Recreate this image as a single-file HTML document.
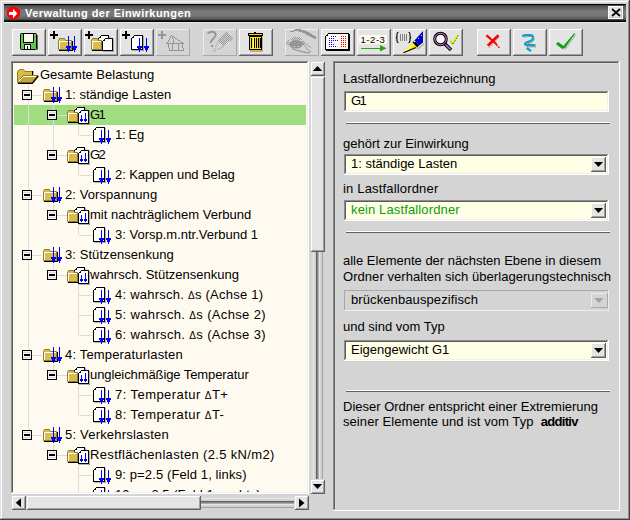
<!DOCTYPE html><html><head><meta charset="utf-8"><style>html,body{margin:0;padding:0;}body{width:630px;height:520px;position:relative;overflow:hidden;background:#d4d4d4;font-family:"Liberation Sans", sans-serif;}.t{position:absolute;white-space:nowrap;font-size:13px;line-height:20px;color:#000;}i{position:absolute;display:block;}</style></head><body><div style="position:absolute;left:0px;top:0px;width:630px;height:1px;background:#e0e0e0"></div><div style="position:absolute;left:0px;top:1px;width:628px;height:1px;background:#ffffff"></div><div style="position:absolute;left:0px;top:0px;width:1px;height:520px;background:#e0e0e0"></div><div style="position:absolute;left:1px;top:1px;width:1px;height:517px;background:#ffffff"></div><div style="position:absolute;left:628px;top:1px;width:1px;height:518px;background:#909090"></div><div style="position:absolute;left:629px;top:0px;width:1px;height:520px;background:#404040"></div><div style="position:absolute;left:1px;top:518px;width:628px;height:1px;background:#909090"></div><div style="position:absolute;left:0px;top:519px;width:630px;height:1px;background:#404040"></div><div style="position:absolute;left:4px;top:4px;width:622px;height:18px;background:linear-gradient(to bottom,#000 0px,#000 1px,#404040 1px,#505050 2px,#5c5c5c 3px,#686868 5px,#787878 7px,#787878 11px,#6c6c6c 13px,#5a5a5a 15px,#383838 16px,#000 17px,#000 18px)"></div><div style="position:absolute;left:4px;top:22px;width:622px;height:1px;background:#e8e8e8"></div><svg style="position:absolute;left:0px;top:0px;" width="30" height="26" viewBox="0 0 30 26" shape-rendering="crispEdges"><circle cx="13.5" cy="13" r="6.6" fill="#ff0000"/><rect x="9" y="12" width="5" height="3" fill="#fff"/><polygon points="13,8.8 17.3,13.5 13,18.2" fill="#fff" shape-rendering="auto"/></svg><div class="t" style="left:25px;top:3px;font-weight:bold;font-size:11px;letter-spacing:0.45px;color:#fff;">Verwaltung der Einwirkungen</div><div style="position:absolute;left:608px;top:6px;width:15px;height:13px;background:#e4e4e4;box-shadow: inset 0 0 0 1px #ffffff, inset -2px -2px 0 #c8c8c8;"></div><svg style="position:absolute;left:608px;top:6px;" width="15" height="13" viewBox="0 0 15 13" shape-rendering="crispEdges"><path d="M4 3L12 10M12 3L4 10" stroke="#000" stroke-width="1.7" shape-rendering="auto"/></svg><div style="position:absolute;left:12px;top:29px;width:34px;height:27px;background:#e4e4e4"><i style="left:0px;top:0px;width:33px;height:1px;background:#ffffff"></i><i style="left:0px;top:0px;width:1px;height:26px;background:#ffffff"></i><i style="left:0px;top:26px;width:34px;height:1px;background:#606060"></i><i style="left:33px;top:0px;width:1px;height:27px;background:#606060"></i><i style="left:1px;top:25px;width:32px;height:1px;background:#a0a0a0"></i><i style="left:32px;top:1px;width:1px;height:25px;background:#a0a0a0"></i></div><div style="position:absolute;left:48px;top:29px;width:34px;height:27px;background:#e4e4e4"><i style="left:0px;top:0px;width:33px;height:1px;background:#ffffff"></i><i style="left:0px;top:0px;width:1px;height:26px;background:#ffffff"></i><i style="left:0px;top:26px;width:34px;height:1px;background:#606060"></i><i style="left:33px;top:0px;width:1px;height:27px;background:#606060"></i><i style="left:1px;top:25px;width:32px;height:1px;background:#a0a0a0"></i><i style="left:32px;top:1px;width:1px;height:25px;background:#a0a0a0"></i></div><div style="position:absolute;left:84px;top:29px;width:34px;height:27px;background:#e4e4e4"><i style="left:0px;top:0px;width:33px;height:1px;background:#ffffff"></i><i style="left:0px;top:0px;width:1px;height:26px;background:#ffffff"></i><i style="left:0px;top:26px;width:34px;height:1px;background:#606060"></i><i style="left:33px;top:0px;width:1px;height:27px;background:#606060"></i><i style="left:1px;top:25px;width:32px;height:1px;background:#a0a0a0"></i><i style="left:32px;top:1px;width:1px;height:25px;background:#a0a0a0"></i></div><div style="position:absolute;left:120px;top:29px;width:34px;height:27px;background:#e4e4e4"><i style="left:0px;top:0px;width:33px;height:1px;background:#ffffff"></i><i style="left:0px;top:0px;width:1px;height:26px;background:#ffffff"></i><i style="left:0px;top:26px;width:34px;height:1px;background:#606060"></i><i style="left:33px;top:0px;width:1px;height:27px;background:#606060"></i><i style="left:1px;top:25px;width:32px;height:1px;background:#a0a0a0"></i><i style="left:32px;top:1px;width:1px;height:25px;background:#a0a0a0"></i></div><div style="position:absolute;left:156px;top:29px;width:34px;height:27px;background:#d4d4d4"><i style="left:0px;top:0px;width:33px;height:1px;background:#ececec"></i><i style="left:0px;top:0px;width:1px;height:26px;background:#ececec"></i><i style="left:0px;top:26px;width:34px;height:1px;background:#a8a8a8"></i><i style="left:33px;top:0px;width:1px;height:27px;background:#a8a8a8"></i></div><div style="position:absolute;left:203px;top:29px;width:34px;height:27px;background:#d4d4d4"><i style="left:0px;top:0px;width:33px;height:1px;background:#ececec"></i><i style="left:0px;top:0px;width:1px;height:26px;background:#ececec"></i><i style="left:0px;top:26px;width:34px;height:1px;background:#a8a8a8"></i><i style="left:33px;top:0px;width:1px;height:27px;background:#a8a8a8"></i></div><div style="position:absolute;left:239px;top:29px;width:34px;height:27px;background:#e4e4e4"><i style="left:0px;top:0px;width:33px;height:1px;background:#ffffff"></i><i style="left:0px;top:0px;width:1px;height:26px;background:#ffffff"></i><i style="left:0px;top:26px;width:34px;height:1px;background:#606060"></i><i style="left:33px;top:0px;width:1px;height:27px;background:#606060"></i><i style="left:1px;top:25px;width:32px;height:1px;background:#a0a0a0"></i><i style="left:32px;top:1px;width:1px;height:25px;background:#a0a0a0"></i></div><div style="position:absolute;left:285px;top:29px;width:34px;height:27px;background:#d4d4d4"><i style="left:0px;top:0px;width:33px;height:1px;background:#ececec"></i><i style="left:0px;top:0px;width:1px;height:26px;background:#ececec"></i><i style="left:0px;top:26px;width:34px;height:1px;background:#a8a8a8"></i><i style="left:33px;top:0px;width:1px;height:27px;background:#a8a8a8"></i></div><div style="position:absolute;left:321px;top:29px;width:34px;height:27px;background:#e4e4e4"><i style="left:0px;top:0px;width:33px;height:1px;background:#ffffff"></i><i style="left:0px;top:0px;width:1px;height:26px;background:#ffffff"></i><i style="left:0px;top:26px;width:34px;height:1px;background:#606060"></i><i style="left:33px;top:0px;width:1px;height:27px;background:#606060"></i><i style="left:1px;top:25px;width:32px;height:1px;background:#a0a0a0"></i><i style="left:32px;top:1px;width:1px;height:25px;background:#a0a0a0"></i></div><div style="position:absolute;left:357px;top:29px;width:34px;height:27px;background:#e4e4e4"><i style="left:0px;top:0px;width:33px;height:1px;background:#ffffff"></i><i style="left:0px;top:0px;width:1px;height:26px;background:#ffffff"></i><i style="left:0px;top:26px;width:34px;height:1px;background:#606060"></i><i style="left:33px;top:0px;width:1px;height:27px;background:#606060"></i><i style="left:1px;top:25px;width:32px;height:1px;background:#a0a0a0"></i><i style="left:32px;top:1px;width:1px;height:25px;background:#a0a0a0"></i></div><div style="position:absolute;left:393px;top:29px;width:34px;height:27px;background:#e4e4e4"><i style="left:0px;top:0px;width:33px;height:1px;background:#ffffff"></i><i style="left:0px;top:0px;width:1px;height:26px;background:#ffffff"></i><i style="left:0px;top:26px;width:34px;height:1px;background:#606060"></i><i style="left:33px;top:0px;width:1px;height:27px;background:#606060"></i><i style="left:1px;top:25px;width:32px;height:1px;background:#a0a0a0"></i><i style="left:32px;top:1px;width:1px;height:25px;background:#a0a0a0"></i></div><div style="position:absolute;left:429px;top:29px;width:34px;height:27px;background:#e4e4e4"><i style="left:0px;top:0px;width:33px;height:1px;background:#ffffff"></i><i style="left:0px;top:0px;width:1px;height:26px;background:#ffffff"></i><i style="left:0px;top:26px;width:34px;height:1px;background:#606060"></i><i style="left:33px;top:0px;width:1px;height:27px;background:#606060"></i><i style="left:1px;top:25px;width:32px;height:1px;background:#a0a0a0"></i><i style="left:32px;top:1px;width:1px;height:25px;background:#a0a0a0"></i></div><div style="position:absolute;left:477px;top:29px;width:34px;height:27px;background:#e4e4e4"><i style="left:0px;top:0px;width:33px;height:1px;background:#ffffff"></i><i style="left:0px;top:0px;width:1px;height:26px;background:#ffffff"></i><i style="left:0px;top:26px;width:34px;height:1px;background:#606060"></i><i style="left:33px;top:0px;width:1px;height:27px;background:#606060"></i><i style="left:1px;top:25px;width:32px;height:1px;background:#a0a0a0"></i><i style="left:32px;top:1px;width:1px;height:25px;background:#a0a0a0"></i></div><div style="position:absolute;left:513px;top:29px;width:34px;height:27px;background:#e4e4e4"><i style="left:0px;top:0px;width:33px;height:1px;background:#ffffff"></i><i style="left:0px;top:0px;width:1px;height:26px;background:#ffffff"></i><i style="left:0px;top:26px;width:34px;height:1px;background:#606060"></i><i style="left:33px;top:0px;width:1px;height:27px;background:#606060"></i><i style="left:1px;top:25px;width:32px;height:1px;background:#a0a0a0"></i><i style="left:32px;top:1px;width:1px;height:25px;background:#a0a0a0"></i></div><div style="position:absolute;left:549px;top:29px;width:34px;height:27px;background:#e4e4e4"><i style="left:0px;top:0px;width:33px;height:1px;background:#ffffff"></i><i style="left:0px;top:0px;width:1px;height:26px;background:#ffffff"></i><i style="left:0px;top:26px;width:34px;height:1px;background:#606060"></i><i style="left:33px;top:0px;width:1px;height:27px;background:#606060"></i><i style="left:1px;top:25px;width:32px;height:1px;background:#a0a0a0"></i><i style="left:32px;top:1px;width:1px;height:25px;background:#a0a0a0"></i></div><svg style="position:absolute;left:0;top:0" width="630" height="520" viewBox="0 0 630 520" shape-rendering="crispEdges"><rect x="20" y="33" width="17" height="17" rx="2" fill="#000" shape-rendering="auto"/><rect x="21" y="34" width="15" height="15" fill="#5cc84c"/><rect x="23" y="33" width="11" height="10" fill="#000"/><rect x="24" y="34" width="9" height="8" fill="#fff8ec"/><rect x="24" y="44" width="7" height="6" fill="#000"/><rect x="25" y="45" width="5" height="4" fill="#fff"/><rect x="27" y="46" width="1" height="3" fill="#000"/><rect x="37" y="35" width="1" height="15" fill="#606060"/><rect x="50" y="34" width="8" height="2" fill="#000"/><rect x="53" y="31" width="2" height="8" fill="#000"/><rect x="59" y="50" width="14" height="1" fill="#000"/><rect x="72" y="41" width="1" height="10" fill="#000"/><path d="M58.5 49.5V40.5L59.5 38.5H64.5L65.5 40.5H71.5V49.5Z" fill="#dcbc48" stroke="#8c7c34" stroke-width="1" shape-rendering="auto"/><path d="M59.5 49V41.5H71" stroke="#fff" stroke-width="1" fill="none"/><rect x="68" y="36" width="1" height="16" fill="#0000ff"/><rect x="66" y="46" width="5" height="2" fill="#0000ff"/><rect x="67" y="48" width="3" height="2" fill="#0000ff"/><rect x="74" y="36" width="1" height="16" fill="#0000ff"/><rect x="72" y="46" width="5" height="2" fill="#0000ff"/><rect x="73" y="48" width="3" height="2" fill="#0000ff"/><rect x="85" y="34" width="8" height="2" fill="#000"/><rect x="88" y="31" width="2" height="8" fill="#000"/><rect x="99" y="36" width="10" height="11" fill="#fff"/><rect x="101" y="35" width="8" height="1" fill="#000"/><rect x="98" y="38" width="1" height="9" fill="#000"/><rect x="108" y="35" width="1" height="12" fill="#000"/><rect x="98" y="46" width="11" height="1" fill="#000"/><rect x="99" y="37" width="1" height="1" fill="#000"/><rect x="100" y="36" width="1" height="1" fill="#000"/><rect x="100" y="37" width="1" height="1" fill="#000"/><rect x="99" y="47" width="11" height="1" fill="#808080" opacity="0.6"/><rect x="109" y="36" width="1" height="12" fill="#808080" opacity="0.6"/><rect x="92" y="50" width="11" height="1" fill="#000"/><rect x="102" y="41" width="1" height="10" fill="#000"/><path d="M91.5 49.5V40.5L92.5 38.5H97.5L98.5 40.5H101.5V49.5Z" fill="#dcbc48" stroke="#8c7c34" stroke-width="1" shape-rendering="auto"/><path d="M92.5 49V41.5H101" stroke="#fff" stroke-width="1" fill="none"/><rect x="103" y="39" width="10" height="12" fill="#fff"/><rect x="105" y="38" width="8" height="1" fill="#000"/><rect x="102" y="41" width="1" height="10" fill="#000"/><rect x="112" y="38" width="1" height="13" fill="#000"/><rect x="102" y="50" width="11" height="1" fill="#000"/><rect x="103" y="40" width="1" height="1" fill="#000"/><rect x="104" y="39" width="1" height="1" fill="#000"/><rect x="104" y="40" width="1" height="1" fill="#000"/><rect x="103" y="51" width="11" height="1" fill="#808080" opacity="0.6"/><rect x="113" y="39" width="1" height="13" fill="#808080" opacity="0.6"/><rect x="122" y="34" width="8" height="2" fill="#000"/><rect x="125" y="31" width="2" height="8" fill="#000"/><rect x="132" y="36" width="11" height="14" fill="#fff"/><rect x="134" y="35" width="9" height="1" fill="#000"/><rect x="131" y="38" width="1" height="12" fill="#000"/><rect x="142" y="35" width="1" height="15" fill="#000"/><rect x="131" y="49" width="12" height="1" fill="#000"/><rect x="132" y="37" width="1" height="1" fill="#000"/><rect x="133" y="36" width="1" height="1" fill="#000"/><rect x="133" y="37" width="1" height="1" fill="#000"/><rect x="132" y="50" width="12" height="1" fill="#808080" opacity="0.6"/><rect x="143" y="36" width="1" height="15" fill="#808080" opacity="0.6"/><rect x="139" y="38" width="1" height="14" fill="#0000ff"/><rect x="137" y="46" width="5" height="2" fill="#0000ff"/><rect x="138" y="48" width="3" height="2" fill="#0000ff"/><rect x="146" y="38" width="1" height="14" fill="#0000ff"/><rect x="144" y="46" width="5" height="2" fill="#0000ff"/><rect x="145" y="48" width="3" height="2" fill="#0000ff"/><rect x="158" y="34" width="8" height="2" fill="#969696"/><rect x="161" y="31" width="2" height="8" fill="#969696"/><rect x="171" y="35" width="1" height="1" fill="#969696"/><rect x="170" y="36" width="1" height="1" fill="#969696"/><rect x="170" y="37" width="1" height="1" fill="#969696"/><rect x="169" y="38" width="1" height="1" fill="#969696"/><rect x="169" y="39" width="1" height="1" fill="#969696"/><rect x="168" y="40" width="1" height="1" fill="#969696"/><rect x="168" y="41" width="1" height="1" fill="#969696"/><rect x="167" y="42" width="1" height="1" fill="#969696"/><rect x="172" y="36" width="1" height="1" fill="#969696"/><rect x="172" y="37" width="1" height="1" fill="#969696"/><rect x="172" y="38" width="1" height="1" fill="#969696"/><rect x="173" y="39" width="1" height="1" fill="#969696"/><rect x="173" y="40" width="1" height="1" fill="#969696"/><rect x="173" y="41" width="1" height="1" fill="#969696"/><rect x="173" y="42" width="1" height="1" fill="#969696"/><rect x="173" y="36" width="1" height="1" fill="#969696"/><rect x="174" y="37" width="1" height="1" fill="#969696"/><rect x="175" y="38" width="1" height="1" fill="#969696"/><rect x="176" y="38" width="1" height="1" fill="#969696"/><rect x="177" y="39" width="1" height="1" fill="#969696"/><rect x="178" y="40" width="1" height="1" fill="#969696"/><rect x="179" y="40" width="1" height="1" fill="#969696"/><rect x="180" y="41" width="1" height="1" fill="#969696"/><rect x="181" y="42" width="1" height="1" fill="#969696"/><rect x="182" y="42" width="1" height="1" fill="#969696"/><rect x="168" y="44" width="1" height="1" fill="#969696"/><rect x="168" y="45" width="1" height="1" fill="#969696"/><rect x="168" y="46" width="1" height="1" fill="#969696"/><rect x="168" y="47" width="1" height="1" fill="#969696"/><rect x="169" y="48" width="1" height="1" fill="#969696"/><rect x="169" y="49" width="1" height="1" fill="#969696"/><rect x="182" y="44" width="1" height="1" fill="#969696"/><rect x="182" y="45" width="1" height="1" fill="#969696"/><rect x="182" y="46" width="1" height="1" fill="#969696"/><rect x="182" y="47" width="1" height="1" fill="#969696"/><rect x="183" y="48" width="1" height="1" fill="#969696"/><rect x="183" y="49" width="1" height="1" fill="#969696"/><rect x="166" y="43" width="18" height="1" fill="#969696"/><rect x="172" y="44" width="1" height="6" fill="#969696"/><rect x="178" y="44" width="1" height="6" fill="#969696"/><rect x="169" y="50" width="15" height="1" fill="#969696"/><g fill="none" stroke="#969696" stroke-width="2" shape-rendering="auto"><path d="M207.5 33.5Q210 31.5 213 31.8Q216 32.5 215.5 35.5Q214.5 38 212 40Q211 41 211 43"/></g><rect x="210.5" y="44.5" width="2" height="2" fill="#969696"/><defs><pattern id="hatch" width="2" height="2" patternUnits="userSpaceOnUse"><rect width="1" height="1" fill="#969696"/><rect x="1" y="1" width="1" height="1" fill="#969696"/></pattern></defs><polygon points="226.5,32 233,38.5 223.5,46.5 218.5,40.5" fill="url(#hatch)"/><path d="M218.5 40.5L213.5 51.5L223.5 46.5" fill="none" stroke="#969696" stroke-width="1" stroke-dasharray="1 1" shape-rendering="auto"/><rect x="250" y="37" width="13" height="15" fill="#b8b090"/><rect x="248" y="33" width="15" height="3" fill="#000"/><rect x="249" y="34" width="13" height="1" fill="#f0e000"/><rect x="254" y="32" width="2" height="1" fill="#000"/><rect x="249" y="36" width="13" height="14" fill="#000"/><rect x="250" y="37" width="11" height="12" fill="#ffe800"/><rect x="251" y="38" width="1" height="10" fill="#000"/><rect x="253" y="38" width="1" height="10" fill="#fff"/><rect x="254" y="38" width="1" height="10" fill="#000"/><rect x="256" y="38" width="1" height="10" fill="#000"/><rect x="258" y="38" width="1" height="10" fill="#000"/><rect x="259" y="38" width="1" height="10" fill="#e8a040"/><rect x="260" y="38" width="1" height="10" fill="#000"/><rect x="295" y="29" width="6" height="1" fill="#969696"/><rect x="293" y="30" width="12" height="1" fill="#969696"/><rect x="290" y="31" width="4" height="1" fill="#969696"/><rect x="299" y="31" width="8" height="1" fill="#969696"/><rect x="302" y="32" width="7" height="1" fill="#969696"/><rect x="305" y="33" width="6" height="1" fill="#969696"/><rect x="306" y="34" width="6" height="1" fill="#969696"/><rect x="308" y="35" width="6" height="1" fill="#969696"/><rect x="310" y="36" width="6" height="1" fill="#969696"/><rect x="312" y="37" width="4" height="1" fill="#969696"/><rect x="314" y="38" width="2" height="1" fill="#969696"/><rect x="293" y="37" width="1" height="1" fill="#969696"/><rect x="295" y="37" width="1" height="1" fill="#969696"/><rect x="297" y="37" width="1" height="1" fill="#969696"/><rect x="299" y="37" width="1" height="1" fill="#969696"/><rect x="292" y="38" width="1" height="1" fill="#969696"/><rect x="294" y="38" width="1" height="1" fill="#969696"/><rect x="296" y="38" width="1" height="1" fill="#969696"/><rect x="298" y="38" width="1" height="1" fill="#969696"/><rect x="300" y="38" width="1" height="1" fill="#969696"/><rect x="291" y="39" width="1" height="1" fill="#969696"/><rect x="293" y="39" width="1" height="1" fill="#969696"/><rect x="295" y="39" width="1" height="1" fill="#969696"/><rect x="297" y="39" width="1" height="1" fill="#969696"/><rect x="299" y="39" width="1" height="1" fill="#969696"/><rect x="301" y="39" width="1" height="1" fill="#969696"/><rect x="288" y="40" width="1" height="1" fill="#969696"/><rect x="287" y="41" width="1" height="1" fill="#969696"/><rect x="303" y="41" width="1" height="1" fill="#969696"/><rect x="286" y="42" width="1" height="1" fill="#969696"/><rect x="288" y="42" width="1" height="1" fill="#969696"/><rect x="287" y="43" width="1" height="1" fill="#969696"/><rect x="303" y="43" width="1" height="1" fill="#969696"/><rect x="286" y="44" width="1" height="1" fill="#969696"/><rect x="288" y="44" width="1" height="1" fill="#969696"/><path d="M289 44.5Q290 40 296 40Q302 40 303 44Q302 48.5 296 48.5Q290 48.5 289 44.5Z" fill="#969696" shape-rendering="auto"/><rect x="294" y="46" width="1" height="1" fill="#d4d4d4"/><rect x="298" y="46" width="1" height="1" fill="#d4d4d4"/><path d="M292 48.5L296 50L301 51.3L305.5 52.3L310 53" stroke="#969696" stroke-width="1.2" fill="none" shape-rendering="auto"/><path d="M302 41.5L310.8 47.4" stroke="#969696" stroke-width="1.3" stroke-dasharray="1.5 1" fill="none" shape-rendering="auto"/><path d="M302.8 43.6L307.6 49.5L310.8 52.2" stroke="#969696" stroke-width="1.2" stroke-dasharray="1.5 1" fill="none" shape-rendering="auto"/><rect x="326" y="34" width="23" height="16" fill="#fffaf0"/><rect x="328" y="33" width="21" height="1" fill="#000"/><rect x="325" y="36" width="1" height="14" fill="#000"/><rect x="348" y="33" width="1" height="17" fill="#000"/><rect x="325" y="49" width="24" height="1" fill="#000"/><rect x="326" y="35" width="1" height="1" fill="#000"/><rect x="327" y="34" width="1" height="1" fill="#000"/><rect x="327" y="35" width="1" height="1" fill="#000"/><rect x="326" y="50" width="24" height="1" fill="#808080" opacity="0.6"/><rect x="349" y="34" width="1" height="17" fill="#808080" opacity="0.6"/><rect x="326" y="50" width="24" height="1" fill="#000"/><rect x="349" y="34" width="1" height="17" fill="#000"/><rect x="331" y="36" width="1" height="1" fill="#0000ff"/><rect x="333" y="36" width="1" height="1" fill="#0000ff"/><rect x="335" y="36" width="1" height="1" fill="#0000ff"/><rect x="341" y="36" width="1" height="1" fill="#ff0000"/><rect x="343" y="36" width="1" height="1" fill="#ff0000"/><rect x="345" y="36" width="1" height="1" fill="#ff0000"/><rect x="329" y="38" width="1" height="1" fill="#0000ff"/><rect x="331" y="38" width="1" height="1" fill="#0000ff"/><rect x="333" y="38" width="1" height="1" fill="#0000ff"/><rect x="341" y="38" width="1" height="1" fill="#ff0000"/><rect x="343" y="38" width="1" height="1" fill="#ff0000"/><rect x="345" y="38" width="1" height="1" fill="#ff0000"/><rect x="329" y="40" width="1" height="1" fill="#0000ff"/><rect x="331" y="40" width="1" height="1" fill="#0000ff"/><rect x="333" y="40" width="1" height="1" fill="#0000ff"/><rect x="335" y="40" width="1" height="1" fill="#0000ff"/><rect x="337" y="40" width="1" height="1" fill="#0000ff"/><rect x="341" y="40" width="1" height="1" fill="#ff0000"/><rect x="343" y="40" width="1" height="1" fill="#ff0000"/><rect x="345" y="40" width="1" height="1" fill="#ff0000"/><rect x="329" y="42" width="1" height="1" fill="#0000ff"/><rect x="331" y="42" width="1" height="1" fill="#0000ff"/><rect x="341" y="42" width="1" height="1" fill="#ff0000"/><rect x="343" y="42" width="1" height="1" fill="#ff0000"/><rect x="345" y="42" width="1" height="1" fill="#ff0000"/><rect x="329" y="44" width="1" height="1" fill="#0000ff"/><rect x="331" y="44" width="1" height="1" fill="#0000ff"/><rect x="333" y="44" width="1" height="1" fill="#0000ff"/><rect x="341" y="44" width="1" height="1" fill="#ff0000"/><rect x="343" y="44" width="1" height="1" fill="#ff0000"/><rect x="345" y="44" width="1" height="1" fill="#ff0000"/><rect x="329" y="46" width="1" height="1" fill="#0000ff"/><rect x="331" y="46" width="1" height="1" fill="#0000ff"/><rect x="333" y="46" width="1" height="1" fill="#0000ff"/><rect x="335" y="46" width="1" height="1" fill="#0000ff"/><rect x="341" y="46" width="1" height="1" fill="#ff0000"/><rect x="343" y="46" width="1" height="1" fill="#ff0000"/><rect x="345" y="46" width="1" height="1" fill="#ff0000"/><rect x="359" y="35" width="28" height="9" fill="#fffaf0"/><text x="360.5" y="43" font-family="Liberation Sans" font-size="9.5" letter-spacing="0.55" fill="#000" shape-rendering="auto">1-2-3</text><path d="M361 48.3H383" stroke="#30a010" stroke-width="1.6"/><polygon points="380,45 386.5,48.3 380,51.5" fill="#30a010" shape-rendering="auto"/><g fill="none" stroke="#000" stroke-width="1.1" shape-rendering="auto"><path d="M398.5 32.3Q397 32.5 397 34V36.5Q397 37.5 395.8 37.5Q397 37.5 397 38.5V41Q397 42.5 398.5 42.7"/><path d="M408.5 32.3Q410 32.5 410 34V36.5Q410 37.5 411.2 37.5Q410 37.5 410 38.5V41Q410 42.5 408.5 42.7"/></g><rect x="400" y="34" width="1" height="7" fill="#808080"/><rect x="402" y="34" width="1" height="7" fill="#808080"/><rect x="404" y="34" width="1" height="7" fill="#808080"/><rect x="406" y="34" width="1" height="7" fill="#808080"/><g shape-rendering="auto"><polygon points="415,50 420,46 424,43 424,45 419,49" fill="#b0a880" opacity="0.7"/><polygon points="423,31 423,42.5 419,45.5 414.5,40.5" fill="#0000d0"/><rect x="421" y="35" width="1" height="1" fill="#f0f000"/><rect x="418" y="38" width="1" height="1" fill="#f0f000"/><polygon points="414.5,40.5 419,45.5 417,47.5 412.5,42.5" fill="#000"/><rect x="414" y="41" width="1.2" height="1.2" fill="#fff"/><polygon points="412.5,42.5 417,47.5 405,52.5 403.5,52" fill="#f0e800"/><path d="M405 51L413.5 44.5" stroke="#fff" stroke-width="1"/><path d="M403.5 52.8L416 47.5" stroke="#000" stroke-width="1.2"/></g><g shape-rendering="auto"><path d="M445 44L451 50" stroke="#000" stroke-width="3.5"/><path d="M445.5 44.5L450.5 49.5" stroke="#c070e0" stroke-width="1.6"/><circle cx="440.5" cy="39" r="5.8" fill="#fafafa" stroke="#000" stroke-width="3"/><circle cx="440.5" cy="39" r="5.8" fill="none" stroke="#e080d0" stroke-width="1"/><path d="M450 40.5L452.5 43.5L458 34" stroke="#f0f000" stroke-width="1.5" fill="none"/><path d="M451 41.5L453 44.5L458.5 35" stroke="#008000" stroke-width="1" stroke-dasharray="1 1" fill="none"/></g><g shape-rendering="auto"><path d="M489.5 47.5L499.5 37" stroke="#708070" stroke-width="1" stroke-dasharray="1 1" fill="none"/><polygon points="485.5,36 487.5,34.5 497,43.5 496,45" fill="#ff0000"/><path d="M496 44L497.5 46" stroke="#ff0000" stroke-width="1.3"/><rect x="498" y="46.5" width="1.5" height="1.5" fill="#ff0000"/><path d="M498.5 35.3L487.8 45.8" stroke="#ff0000" stroke-width="2.8" fill="none"/></g><g shape-rendering="auto" fill="none" stroke-linecap="round"><path d="M523.5 36.5L525.5 35.5H531Q533.5 36 533.2 38.5Q532.5 41 529.5 42L526.5 43.5Q524.5 45 526.5 46H535" stroke="#888" stroke-width="1" transform="translate(0.8,0.8)"/><path d="M523 35.8L525 35H531Q533.3 35.5 533 38.2Q532.3 40.5 529 41.5L526 42.8Q524 44.2 526 45H534.5" stroke="#10a0c8" stroke-width="2.2"/><path d="M527.3 48.5L530.3 50.5" stroke="#10a0c8" stroke-width="2.2"/></g><g shape-rendering="auto"><path d="M565 49.5L576 34.5" stroke="#707070" stroke-width="1" stroke-dasharray="1 1" fill="none"/><path d="M557 43L563.5 48" stroke="#10a010" stroke-width="3" fill="none"/><polygon points="562.3,47.2 564.5,48.8 575.1,33.7 574.3,33" fill="#10a010"/></g></svg><div style="position:absolute;left:11px;top:61px;width:298px;height:433px;background:#fffaf0"><i style="left:0px;top:0px;width:297px;height:1px;background:#8c8c8c"></i><i style="left:0px;top:0px;width:1px;height:432px;background:#8c8c8c"></i><i style="left:1px;top:1px;width:295px;height:1px;background:#5c5c5c"></i><i style="left:1px;top:1px;width:1px;height:430px;background:#5c5c5c"></i><i style="left:0px;top:432px;width:298px;height:1px;background:#ffffff"></i><i style="left:297px;top:0px;width:1px;height:433px;background:#ffffff"></i><i style="left:1px;top:431px;width:296px;height:1px;background:#f0f0f0"></i><i style="left:296px;top:1px;width:1px;height:431px;background:#f0f0f0"></i></div><div style="position:absolute;left:13px;top:63px;width:294px;height:429px;overflow:hidden;"><svg style="position:absolute;left:-13px;top:-63px" width="630" height="520" viewBox="0 0 630 520" shape-rendering="crispEdges"><rect x="14" y="105" width="292" height="20" fill="#a0dd80"/><rect x="28" y="84" width="1" height="351" fill="#dcdcdc"/><rect x="32" y="95" width="10" height="1" fill="#dcdcdc"/><rect x="53" y="104" width="1" height="51" fill="#dcdcdc"/><rect x="57" y="115" width="10" height="1" fill="#dcdcdc"/><rect x="78" y="124" width="1" height="11" fill="#dcdcdc"/><rect x="79" y="135" width="13" height="1" fill="#dcdcdc"/><rect x="57" y="155" width="10" height="1" fill="#dcdcdc"/><rect x="78" y="164" width="1" height="11" fill="#dcdcdc"/><rect x="79" y="175" width="13" height="1" fill="#dcdcdc"/><rect x="32" y="195" width="10" height="1" fill="#dcdcdc"/><rect x="53" y="204" width="1" height="11" fill="#dcdcdc"/><rect x="57" y="215" width="10" height="1" fill="#dcdcdc"/><rect x="78" y="224" width="1" height="11" fill="#dcdcdc"/><rect x="79" y="235" width="13" height="1" fill="#dcdcdc"/><rect x="32" y="255" width="10" height="1" fill="#dcdcdc"/><rect x="53" y="264" width="1" height="11" fill="#dcdcdc"/><rect x="57" y="275" width="10" height="1" fill="#dcdcdc"/><rect x="78" y="284" width="1" height="51" fill="#dcdcdc"/><rect x="79" y="295" width="13" height="1" fill="#dcdcdc"/><rect x="79" y="315" width="13" height="1" fill="#dcdcdc"/><rect x="79" y="335" width="13" height="1" fill="#dcdcdc"/><rect x="32" y="355" width="10" height="1" fill="#dcdcdc"/><rect x="53" y="364" width="1" height="11" fill="#dcdcdc"/><rect x="57" y="375" width="10" height="1" fill="#dcdcdc"/><rect x="78" y="384" width="1" height="31" fill="#dcdcdc"/><rect x="79" y="395" width="13" height="1" fill="#dcdcdc"/><rect x="79" y="415" width="13" height="1" fill="#dcdcdc"/><rect x="32" y="435" width="10" height="1" fill="#dcdcdc"/><rect x="53" y="444" width="1" height="11" fill="#dcdcdc"/><rect x="57" y="455" width="10" height="1" fill="#dcdcdc"/><rect x="78" y="464" width="1" height="31" fill="#dcdcdc"/><rect x="79" y="475" width="13" height="1" fill="#dcdcdc"/><rect x="79" y="495" width="13" height="1" fill="#dcdcdc"/><g shape-rendering="auto"><path d="M17.5 82.5V71.5L19.5 69.5H23.5L25 71.5H32.5V75" fill="#dcbc40" stroke="#8c7c34" stroke-width="1"/><rect x="32" y="71" width="1.3" height="5" fill="#000"/><path d="M17.5 82.5L23 75.5H38L32 82.5Z" fill="#c4a438" stroke="#8c7c34" stroke-width="1"/><path d="M18.5 81.5L23.5 76.5H36" stroke="#fff" stroke-width="1" fill="none"/><path d="M18 83.3H32.3L38.3 76" stroke="#000" stroke-width="1.3" fill="none"/></g><rect x="22" y="90" width="10" height="10" fill="#000"/><rect x="23" y="91" width="8" height="8" fill="#f4f4f4"/><rect x="23" y="92" width="8" height="1" fill="#dcdcdc"/><rect x="23" y="97" width="8" height="1" fill="#dcdcdc"/><rect x="24" y="94" width="6" height="2" fill="#000"/><rect x="44" y="101" width="14" height="1" fill="#000"/><rect x="57" y="92" width="1" height="10" fill="#000"/><path d="M43.5 100.5V91.5L44.5 89.5H49.5L50.5 91.5H56.5V100.5Z" fill="#dcbc48" stroke="#8c7c34" stroke-width="1" shape-rendering="auto"/><path d="M44.5 100V92.5H56" stroke="#fff" stroke-width="1" fill="none"/><rect x="53" y="87" width="1" height="16" fill="#0000ff"/><rect x="51" y="97" width="5" height="2" fill="#0000ff"/><rect x="52" y="99" width="3" height="2" fill="#0000ff"/><rect x="59" y="87" width="1" height="16" fill="#0000ff"/><rect x="57" y="97" width="5" height="2" fill="#0000ff"/><rect x="58" y="99" width="3" height="2" fill="#0000ff"/><rect x="47" y="110" width="10" height="10" fill="#000"/><rect x="48" y="111" width="8" height="8" fill="#f4f4f4"/><rect x="48" y="112" width="8" height="1" fill="#dcdcdc"/><rect x="48" y="117" width="8" height="1" fill="#dcdcdc"/><rect x="49" y="114" width="6" height="2" fill="#000"/><rect x="75" y="108" width="10" height="11" fill="#fff"/><rect x="77" y="107" width="8" height="1" fill="#000"/><rect x="74" y="110" width="1" height="9" fill="#000"/><rect x="84" y="107" width="1" height="12" fill="#000"/><rect x="74" y="118" width="11" height="1" fill="#000"/><rect x="75" y="109" width="1" height="1" fill="#000"/><rect x="76" y="108" width="1" height="1" fill="#000"/><rect x="76" y="109" width="1" height="1" fill="#000"/><rect x="75" y="119" width="11" height="1" fill="#808080" opacity="0.6"/><rect x="85" y="108" width="1" height="12" fill="#808080" opacity="0.6"/><rect x="68" y="122" width="11" height="1" fill="#000"/><rect x="78" y="113" width="1" height="10" fill="#000"/><path d="M67.5 121.5V112.5L68.5 110.5H73.5L74.5 112.5H77.5V121.5Z" fill="#dcbc48" stroke="#8c7c34" stroke-width="1" shape-rendering="auto"/><path d="M68.5 121V113.5H77" stroke="#fff" stroke-width="1" fill="none"/><rect x="79" y="111" width="10" height="13" fill="#fff"/><rect x="81" y="110" width="8" height="1" fill="#000"/><rect x="78" y="113" width="1" height="11" fill="#000"/><rect x="88" y="110" width="1" height="14" fill="#000"/><rect x="78" y="123" width="11" height="1" fill="#000"/><rect x="79" y="112" width="1" height="1" fill="#000"/><rect x="80" y="111" width="1" height="1" fill="#000"/><rect x="80" y="112" width="1" height="1" fill="#000"/><rect x="79" y="124" width="11" height="1" fill="#808080" opacity="0.6"/><rect x="89" y="111" width="1" height="14" fill="#808080" opacity="0.6"/><rect x="81" y="115" width="1" height="7" fill="#0000ff"/><rect x="80" y="119" width="3" height="2" fill="#0000ff"/><rect x="85" y="113" width="1" height="9" fill="#0000ff"/><rect x="84" y="119" width="3" height="2" fill="#0000ff"/><rect x="94" y="128" width="11" height="14" fill="#fff"/><rect x="96" y="127" width="9" height="1" fill="#000"/><rect x="93" y="130" width="1" height="12" fill="#000"/><rect x="104" y="127" width="1" height="15" fill="#000"/><rect x="93" y="141" width="12" height="1" fill="#000"/><rect x="94" y="129" width="1" height="1" fill="#000"/><rect x="95" y="128" width="1" height="1" fill="#000"/><rect x="95" y="129" width="1" height="1" fill="#000"/><rect x="94" y="142" width="12" height="1" fill="#808080" opacity="0.6"/><rect x="105" y="128" width="1" height="15" fill="#808080" opacity="0.6"/><rect x="101" y="130" width="1" height="14" fill="#0000ff"/><rect x="99" y="138" width="5" height="2" fill="#0000ff"/><rect x="100" y="140" width="3" height="2" fill="#0000ff"/><rect x="108" y="130" width="1" height="14" fill="#0000ff"/><rect x="106" y="138" width="5" height="2" fill="#0000ff"/><rect x="107" y="140" width="3" height="2" fill="#0000ff"/><rect x="47" y="150" width="10" height="10" fill="#000"/><rect x="48" y="151" width="8" height="8" fill="#f4f4f4"/><rect x="48" y="152" width="8" height="1" fill="#dcdcdc"/><rect x="48" y="157" width="8" height="1" fill="#dcdcdc"/><rect x="49" y="154" width="6" height="2" fill="#000"/><rect x="75" y="148" width="10" height="11" fill="#fff"/><rect x="77" y="147" width="8" height="1" fill="#000"/><rect x="74" y="150" width="1" height="9" fill="#000"/><rect x="84" y="147" width="1" height="12" fill="#000"/><rect x="74" y="158" width="11" height="1" fill="#000"/><rect x="75" y="149" width="1" height="1" fill="#000"/><rect x="76" y="148" width="1" height="1" fill="#000"/><rect x="76" y="149" width="1" height="1" fill="#000"/><rect x="75" y="159" width="11" height="1" fill="#808080" opacity="0.6"/><rect x="85" y="148" width="1" height="12" fill="#808080" opacity="0.6"/><rect x="68" y="162" width="11" height="1" fill="#000"/><rect x="78" y="153" width="1" height="10" fill="#000"/><path d="M67.5 161.5V152.5L68.5 150.5H73.5L74.5 152.5H77.5V161.5Z" fill="#dcbc48" stroke="#8c7c34" stroke-width="1" shape-rendering="auto"/><path d="M68.5 161V153.5H77" stroke="#fff" stroke-width="1" fill="none"/><rect x="79" y="151" width="10" height="13" fill="#fff"/><rect x="81" y="150" width="8" height="1" fill="#000"/><rect x="78" y="153" width="1" height="11" fill="#000"/><rect x="88" y="150" width="1" height="14" fill="#000"/><rect x="78" y="163" width="11" height="1" fill="#000"/><rect x="79" y="152" width="1" height="1" fill="#000"/><rect x="80" y="151" width="1" height="1" fill="#000"/><rect x="80" y="152" width="1" height="1" fill="#000"/><rect x="79" y="164" width="11" height="1" fill="#808080" opacity="0.6"/><rect x="89" y="151" width="1" height="14" fill="#808080" opacity="0.6"/><rect x="81" y="155" width="1" height="7" fill="#0000ff"/><rect x="80" y="159" width="3" height="2" fill="#0000ff"/><rect x="85" y="153" width="1" height="9" fill="#0000ff"/><rect x="84" y="159" width="3" height="2" fill="#0000ff"/><rect x="94" y="168" width="11" height="14" fill="#fff"/><rect x="96" y="167" width="9" height="1" fill="#000"/><rect x="93" y="170" width="1" height="12" fill="#000"/><rect x="104" y="167" width="1" height="15" fill="#000"/><rect x="93" y="181" width="12" height="1" fill="#000"/><rect x="94" y="169" width="1" height="1" fill="#000"/><rect x="95" y="168" width="1" height="1" fill="#000"/><rect x="95" y="169" width="1" height="1" fill="#000"/><rect x="94" y="182" width="12" height="1" fill="#808080" opacity="0.6"/><rect x="105" y="168" width="1" height="15" fill="#808080" opacity="0.6"/><rect x="101" y="170" width="1" height="14" fill="#0000ff"/><rect x="99" y="178" width="5" height="2" fill="#0000ff"/><rect x="100" y="180" width="3" height="2" fill="#0000ff"/><rect x="108" y="170" width="1" height="14" fill="#0000ff"/><rect x="106" y="178" width="5" height="2" fill="#0000ff"/><rect x="107" y="180" width="3" height="2" fill="#0000ff"/><rect x="22" y="190" width="10" height="10" fill="#000"/><rect x="23" y="191" width="8" height="8" fill="#f4f4f4"/><rect x="23" y="192" width="8" height="1" fill="#dcdcdc"/><rect x="23" y="197" width="8" height="1" fill="#dcdcdc"/><rect x="24" y="194" width="6" height="2" fill="#000"/><rect x="44" y="201" width="14" height="1" fill="#000"/><rect x="57" y="192" width="1" height="10" fill="#000"/><path d="M43.5 200.5V191.5L44.5 189.5H49.5L50.5 191.5H56.5V200.5Z" fill="#dcbc48" stroke="#8c7c34" stroke-width="1" shape-rendering="auto"/><path d="M44.5 200V192.5H56" stroke="#fff" stroke-width="1" fill="none"/><rect x="53" y="187" width="1" height="16" fill="#0000ff"/><rect x="51" y="197" width="5" height="2" fill="#0000ff"/><rect x="52" y="199" width="3" height="2" fill="#0000ff"/><rect x="59" y="187" width="1" height="16" fill="#0000ff"/><rect x="57" y="197" width="5" height="2" fill="#0000ff"/><rect x="58" y="199" width="3" height="2" fill="#0000ff"/><rect x="47" y="210" width="10" height="10" fill="#000"/><rect x="48" y="211" width="8" height="8" fill="#f4f4f4"/><rect x="48" y="212" width="8" height="1" fill="#dcdcdc"/><rect x="48" y="217" width="8" height="1" fill="#dcdcdc"/><rect x="49" y="214" width="6" height="2" fill="#000"/><rect x="75" y="208" width="10" height="11" fill="#fff"/><rect x="77" y="207" width="8" height="1" fill="#000"/><rect x="74" y="210" width="1" height="9" fill="#000"/><rect x="84" y="207" width="1" height="12" fill="#000"/><rect x="74" y="218" width="11" height="1" fill="#000"/><rect x="75" y="209" width="1" height="1" fill="#000"/><rect x="76" y="208" width="1" height="1" fill="#000"/><rect x="76" y="209" width="1" height="1" fill="#000"/><rect x="75" y="219" width="11" height="1" fill="#808080" opacity="0.6"/><rect x="85" y="208" width="1" height="12" fill="#808080" opacity="0.6"/><rect x="68" y="222" width="11" height="1" fill="#000"/><rect x="78" y="213" width="1" height="10" fill="#000"/><path d="M67.5 221.5V212.5L68.5 210.5H73.5L74.5 212.5H77.5V221.5Z" fill="#dcbc48" stroke="#8c7c34" stroke-width="1" shape-rendering="auto"/><path d="M68.5 221V213.5H77" stroke="#fff" stroke-width="1" fill="none"/><rect x="79" y="211" width="10" height="13" fill="#fff"/><rect x="81" y="210" width="8" height="1" fill="#000"/><rect x="78" y="213" width="1" height="11" fill="#000"/><rect x="88" y="210" width="1" height="14" fill="#000"/><rect x="78" y="223" width="11" height="1" fill="#000"/><rect x="79" y="212" width="1" height="1" fill="#000"/><rect x="80" y="211" width="1" height="1" fill="#000"/><rect x="80" y="212" width="1" height="1" fill="#000"/><rect x="79" y="224" width="11" height="1" fill="#808080" opacity="0.6"/><rect x="89" y="211" width="1" height="14" fill="#808080" opacity="0.6"/><rect x="81" y="215" width="1" height="7" fill="#0000ff"/><rect x="80" y="219" width="3" height="2" fill="#0000ff"/><rect x="85" y="213" width="1" height="9" fill="#0000ff"/><rect x="84" y="219" width="3" height="2" fill="#0000ff"/><rect x="94" y="228" width="11" height="14" fill="#fff"/><rect x="96" y="227" width="9" height="1" fill="#000"/><rect x="93" y="230" width="1" height="12" fill="#000"/><rect x="104" y="227" width="1" height="15" fill="#000"/><rect x="93" y="241" width="12" height="1" fill="#000"/><rect x="94" y="229" width="1" height="1" fill="#000"/><rect x="95" y="228" width="1" height="1" fill="#000"/><rect x="95" y="229" width="1" height="1" fill="#000"/><rect x="94" y="242" width="12" height="1" fill="#808080" opacity="0.6"/><rect x="105" y="228" width="1" height="15" fill="#808080" opacity="0.6"/><rect x="101" y="230" width="1" height="14" fill="#0000ff"/><rect x="99" y="238" width="5" height="2" fill="#0000ff"/><rect x="100" y="240" width="3" height="2" fill="#0000ff"/><rect x="108" y="230" width="1" height="14" fill="#0000ff"/><rect x="106" y="238" width="5" height="2" fill="#0000ff"/><rect x="107" y="240" width="3" height="2" fill="#0000ff"/><rect x="22" y="250" width="10" height="10" fill="#000"/><rect x="23" y="251" width="8" height="8" fill="#f4f4f4"/><rect x="23" y="252" width="8" height="1" fill="#dcdcdc"/><rect x="23" y="257" width="8" height="1" fill="#dcdcdc"/><rect x="24" y="254" width="6" height="2" fill="#000"/><rect x="44" y="261" width="14" height="1" fill="#000"/><rect x="57" y="252" width="1" height="10" fill="#000"/><path d="M43.5 260.5V251.5L44.5 249.5H49.5L50.5 251.5H56.5V260.5Z" fill="#dcbc48" stroke="#8c7c34" stroke-width="1" shape-rendering="auto"/><path d="M44.5 260V252.5H56" stroke="#fff" stroke-width="1" fill="none"/><rect x="53" y="247" width="1" height="16" fill="#0000ff"/><rect x="51" y="257" width="5" height="2" fill="#0000ff"/><rect x="52" y="259" width="3" height="2" fill="#0000ff"/><rect x="59" y="247" width="1" height="16" fill="#0000ff"/><rect x="57" y="257" width="5" height="2" fill="#0000ff"/><rect x="58" y="259" width="3" height="2" fill="#0000ff"/><rect x="47" y="270" width="10" height="10" fill="#000"/><rect x="48" y="271" width="8" height="8" fill="#f4f4f4"/><rect x="48" y="272" width="8" height="1" fill="#dcdcdc"/><rect x="48" y="277" width="8" height="1" fill="#dcdcdc"/><rect x="49" y="274" width="6" height="2" fill="#000"/><rect x="75" y="268" width="10" height="11" fill="#fff"/><rect x="77" y="267" width="8" height="1" fill="#000"/><rect x="74" y="270" width="1" height="9" fill="#000"/><rect x="84" y="267" width="1" height="12" fill="#000"/><rect x="74" y="278" width="11" height="1" fill="#000"/><rect x="75" y="269" width="1" height="1" fill="#000"/><rect x="76" y="268" width="1" height="1" fill="#000"/><rect x="76" y="269" width="1" height="1" fill="#000"/><rect x="75" y="279" width="11" height="1" fill="#808080" opacity="0.6"/><rect x="85" y="268" width="1" height="12" fill="#808080" opacity="0.6"/><rect x="68" y="282" width="11" height="1" fill="#000"/><rect x="78" y="273" width="1" height="10" fill="#000"/><path d="M67.5 281.5V272.5L68.5 270.5H73.5L74.5 272.5H77.5V281.5Z" fill="#dcbc48" stroke="#8c7c34" stroke-width="1" shape-rendering="auto"/><path d="M68.5 281V273.5H77" stroke="#fff" stroke-width="1" fill="none"/><rect x="79" y="271" width="10" height="13" fill="#fff"/><rect x="81" y="270" width="8" height="1" fill="#000"/><rect x="78" y="273" width="1" height="11" fill="#000"/><rect x="88" y="270" width="1" height="14" fill="#000"/><rect x="78" y="283" width="11" height="1" fill="#000"/><rect x="79" y="272" width="1" height="1" fill="#000"/><rect x="80" y="271" width="1" height="1" fill="#000"/><rect x="80" y="272" width="1" height="1" fill="#000"/><rect x="79" y="284" width="11" height="1" fill="#808080" opacity="0.6"/><rect x="89" y="271" width="1" height="14" fill="#808080" opacity="0.6"/><rect x="81" y="275" width="1" height="7" fill="#0000ff"/><rect x="80" y="279" width="3" height="2" fill="#0000ff"/><rect x="85" y="273" width="1" height="9" fill="#0000ff"/><rect x="84" y="279" width="3" height="2" fill="#0000ff"/><rect x="94" y="288" width="11" height="14" fill="#fff"/><rect x="96" y="287" width="9" height="1" fill="#000"/><rect x="93" y="290" width="1" height="12" fill="#000"/><rect x="104" y="287" width="1" height="15" fill="#000"/><rect x="93" y="301" width="12" height="1" fill="#000"/><rect x="94" y="289" width="1" height="1" fill="#000"/><rect x="95" y="288" width="1" height="1" fill="#000"/><rect x="95" y="289" width="1" height="1" fill="#000"/><rect x="94" y="302" width="12" height="1" fill="#808080" opacity="0.6"/><rect x="105" y="288" width="1" height="15" fill="#808080" opacity="0.6"/><rect x="101" y="290" width="1" height="14" fill="#0000ff"/><rect x="99" y="298" width="5" height="2" fill="#0000ff"/><rect x="100" y="300" width="3" height="2" fill="#0000ff"/><rect x="108" y="290" width="1" height="14" fill="#0000ff"/><rect x="106" y="298" width="5" height="2" fill="#0000ff"/><rect x="107" y="300" width="3" height="2" fill="#0000ff"/><rect x="94" y="308" width="11" height="14" fill="#fff"/><rect x="96" y="307" width="9" height="1" fill="#000"/><rect x="93" y="310" width="1" height="12" fill="#000"/><rect x="104" y="307" width="1" height="15" fill="#000"/><rect x="93" y="321" width="12" height="1" fill="#000"/><rect x="94" y="309" width="1" height="1" fill="#000"/><rect x="95" y="308" width="1" height="1" fill="#000"/><rect x="95" y="309" width="1" height="1" fill="#000"/><rect x="94" y="322" width="12" height="1" fill="#808080" opacity="0.6"/><rect x="105" y="308" width="1" height="15" fill="#808080" opacity="0.6"/><rect x="101" y="310" width="1" height="14" fill="#0000ff"/><rect x="99" y="318" width="5" height="2" fill="#0000ff"/><rect x="100" y="320" width="3" height="2" fill="#0000ff"/><rect x="108" y="310" width="1" height="14" fill="#0000ff"/><rect x="106" y="318" width="5" height="2" fill="#0000ff"/><rect x="107" y="320" width="3" height="2" fill="#0000ff"/><rect x="94" y="328" width="11" height="14" fill="#fff"/><rect x="96" y="327" width="9" height="1" fill="#000"/><rect x="93" y="330" width="1" height="12" fill="#000"/><rect x="104" y="327" width="1" height="15" fill="#000"/><rect x="93" y="341" width="12" height="1" fill="#000"/><rect x="94" y="329" width="1" height="1" fill="#000"/><rect x="95" y="328" width="1" height="1" fill="#000"/><rect x="95" y="329" width="1" height="1" fill="#000"/><rect x="94" y="342" width="12" height="1" fill="#808080" opacity="0.6"/><rect x="105" y="328" width="1" height="15" fill="#808080" opacity="0.6"/><rect x="101" y="330" width="1" height="14" fill="#0000ff"/><rect x="99" y="338" width="5" height="2" fill="#0000ff"/><rect x="100" y="340" width="3" height="2" fill="#0000ff"/><rect x="108" y="330" width="1" height="14" fill="#0000ff"/><rect x="106" y="338" width="5" height="2" fill="#0000ff"/><rect x="107" y="340" width="3" height="2" fill="#0000ff"/><rect x="22" y="350" width="10" height="10" fill="#000"/><rect x="23" y="351" width="8" height="8" fill="#f4f4f4"/><rect x="23" y="352" width="8" height="1" fill="#dcdcdc"/><rect x="23" y="357" width="8" height="1" fill="#dcdcdc"/><rect x="24" y="354" width="6" height="2" fill="#000"/><rect x="44" y="361" width="14" height="1" fill="#000"/><rect x="57" y="352" width="1" height="10" fill="#000"/><path d="M43.5 360.5V351.5L44.5 349.5H49.5L50.5 351.5H56.5V360.5Z" fill="#dcbc48" stroke="#8c7c34" stroke-width="1" shape-rendering="auto"/><path d="M44.5 360V352.5H56" stroke="#fff" stroke-width="1" fill="none"/><rect x="53" y="347" width="1" height="16" fill="#0000ff"/><rect x="51" y="357" width="5" height="2" fill="#0000ff"/><rect x="52" y="359" width="3" height="2" fill="#0000ff"/><rect x="59" y="347" width="1" height="16" fill="#0000ff"/><rect x="57" y="357" width="5" height="2" fill="#0000ff"/><rect x="58" y="359" width="3" height="2" fill="#0000ff"/><rect x="47" y="370" width="10" height="10" fill="#000"/><rect x="48" y="371" width="8" height="8" fill="#f4f4f4"/><rect x="48" y="372" width="8" height="1" fill="#dcdcdc"/><rect x="48" y="377" width="8" height="1" fill="#dcdcdc"/><rect x="49" y="374" width="6" height="2" fill="#000"/><rect x="75" y="368" width="10" height="11" fill="#fff"/><rect x="77" y="367" width="8" height="1" fill="#000"/><rect x="74" y="370" width="1" height="9" fill="#000"/><rect x="84" y="367" width="1" height="12" fill="#000"/><rect x="74" y="378" width="11" height="1" fill="#000"/><rect x="75" y="369" width="1" height="1" fill="#000"/><rect x="76" y="368" width="1" height="1" fill="#000"/><rect x="76" y="369" width="1" height="1" fill="#000"/><rect x="75" y="379" width="11" height="1" fill="#808080" opacity="0.6"/><rect x="85" y="368" width="1" height="12" fill="#808080" opacity="0.6"/><rect x="68" y="382" width="11" height="1" fill="#000"/><rect x="78" y="373" width="1" height="10" fill="#000"/><path d="M67.5 381.5V372.5L68.5 370.5H73.5L74.5 372.5H77.5V381.5Z" fill="#dcbc48" stroke="#8c7c34" stroke-width="1" shape-rendering="auto"/><path d="M68.5 381V373.5H77" stroke="#fff" stroke-width="1" fill="none"/><rect x="79" y="371" width="10" height="13" fill="#fff"/><rect x="81" y="370" width="8" height="1" fill="#000"/><rect x="78" y="373" width="1" height="11" fill="#000"/><rect x="88" y="370" width="1" height="14" fill="#000"/><rect x="78" y="383" width="11" height="1" fill="#000"/><rect x="79" y="372" width="1" height="1" fill="#000"/><rect x="80" y="371" width="1" height="1" fill="#000"/><rect x="80" y="372" width="1" height="1" fill="#000"/><rect x="79" y="384" width="11" height="1" fill="#808080" opacity="0.6"/><rect x="89" y="371" width="1" height="14" fill="#808080" opacity="0.6"/><rect x="81" y="375" width="1" height="7" fill="#0000ff"/><rect x="80" y="379" width="3" height="2" fill="#0000ff"/><rect x="85" y="373" width="1" height="9" fill="#0000ff"/><rect x="84" y="379" width="3" height="2" fill="#0000ff"/><rect x="94" y="388" width="11" height="14" fill="#fff"/><rect x="96" y="387" width="9" height="1" fill="#000"/><rect x="93" y="390" width="1" height="12" fill="#000"/><rect x="104" y="387" width="1" height="15" fill="#000"/><rect x="93" y="401" width="12" height="1" fill="#000"/><rect x="94" y="389" width="1" height="1" fill="#000"/><rect x="95" y="388" width="1" height="1" fill="#000"/><rect x="95" y="389" width="1" height="1" fill="#000"/><rect x="94" y="402" width="12" height="1" fill="#808080" opacity="0.6"/><rect x="105" y="388" width="1" height="15" fill="#808080" opacity="0.6"/><rect x="101" y="390" width="1" height="14" fill="#0000ff"/><rect x="99" y="398" width="5" height="2" fill="#0000ff"/><rect x="100" y="400" width="3" height="2" fill="#0000ff"/><rect x="108" y="390" width="1" height="14" fill="#0000ff"/><rect x="106" y="398" width="5" height="2" fill="#0000ff"/><rect x="107" y="400" width="3" height="2" fill="#0000ff"/><rect x="94" y="408" width="11" height="14" fill="#fff"/><rect x="96" y="407" width="9" height="1" fill="#000"/><rect x="93" y="410" width="1" height="12" fill="#000"/><rect x="104" y="407" width="1" height="15" fill="#000"/><rect x="93" y="421" width="12" height="1" fill="#000"/><rect x="94" y="409" width="1" height="1" fill="#000"/><rect x="95" y="408" width="1" height="1" fill="#000"/><rect x="95" y="409" width="1" height="1" fill="#000"/><rect x="94" y="422" width="12" height="1" fill="#808080" opacity="0.6"/><rect x="105" y="408" width="1" height="15" fill="#808080" opacity="0.6"/><rect x="101" y="410" width="1" height="14" fill="#0000ff"/><rect x="99" y="418" width="5" height="2" fill="#0000ff"/><rect x="100" y="420" width="3" height="2" fill="#0000ff"/><rect x="108" y="410" width="1" height="14" fill="#0000ff"/><rect x="106" y="418" width="5" height="2" fill="#0000ff"/><rect x="107" y="420" width="3" height="2" fill="#0000ff"/><rect x="22" y="430" width="10" height="10" fill="#000"/><rect x="23" y="431" width="8" height="8" fill="#f4f4f4"/><rect x="23" y="432" width="8" height="1" fill="#dcdcdc"/><rect x="23" y="437" width="8" height="1" fill="#dcdcdc"/><rect x="24" y="434" width="6" height="2" fill="#000"/><rect x="44" y="441" width="14" height="1" fill="#000"/><rect x="57" y="432" width="1" height="10" fill="#000"/><path d="M43.5 440.5V431.5L44.5 429.5H49.5L50.5 431.5H56.5V440.5Z" fill="#dcbc48" stroke="#8c7c34" stroke-width="1" shape-rendering="auto"/><path d="M44.5 440V432.5H56" stroke="#fff" stroke-width="1" fill="none"/><rect x="53" y="427" width="1" height="16" fill="#0000ff"/><rect x="51" y="437" width="5" height="2" fill="#0000ff"/><rect x="52" y="439" width="3" height="2" fill="#0000ff"/><rect x="59" y="427" width="1" height="16" fill="#0000ff"/><rect x="57" y="437" width="5" height="2" fill="#0000ff"/><rect x="58" y="439" width="3" height="2" fill="#0000ff"/><rect x="47" y="450" width="10" height="10" fill="#000"/><rect x="48" y="451" width="8" height="8" fill="#f4f4f4"/><rect x="48" y="452" width="8" height="1" fill="#dcdcdc"/><rect x="48" y="457" width="8" height="1" fill="#dcdcdc"/><rect x="49" y="454" width="6" height="2" fill="#000"/><rect x="75" y="448" width="10" height="11" fill="#fff"/><rect x="77" y="447" width="8" height="1" fill="#000"/><rect x="74" y="450" width="1" height="9" fill="#000"/><rect x="84" y="447" width="1" height="12" fill="#000"/><rect x="74" y="458" width="11" height="1" fill="#000"/><rect x="75" y="449" width="1" height="1" fill="#000"/><rect x="76" y="448" width="1" height="1" fill="#000"/><rect x="76" y="449" width="1" height="1" fill="#000"/><rect x="75" y="459" width="11" height="1" fill="#808080" opacity="0.6"/><rect x="85" y="448" width="1" height="12" fill="#808080" opacity="0.6"/><rect x="68" y="462" width="11" height="1" fill="#000"/><rect x="78" y="453" width="1" height="10" fill="#000"/><path d="M67.5 461.5V452.5L68.5 450.5H73.5L74.5 452.5H77.5V461.5Z" fill="#dcbc48" stroke="#8c7c34" stroke-width="1" shape-rendering="auto"/><path d="M68.5 461V453.5H77" stroke="#fff" stroke-width="1" fill="none"/><rect x="79" y="451" width="10" height="13" fill="#fff"/><rect x="81" y="450" width="8" height="1" fill="#000"/><rect x="78" y="453" width="1" height="11" fill="#000"/><rect x="88" y="450" width="1" height="14" fill="#000"/><rect x="78" y="463" width="11" height="1" fill="#000"/><rect x="79" y="452" width="1" height="1" fill="#000"/><rect x="80" y="451" width="1" height="1" fill="#000"/><rect x="80" y="452" width="1" height="1" fill="#000"/><rect x="79" y="464" width="11" height="1" fill="#808080" opacity="0.6"/><rect x="89" y="451" width="1" height="14" fill="#808080" opacity="0.6"/><rect x="81" y="455" width="1" height="7" fill="#0000ff"/><rect x="80" y="459" width="3" height="2" fill="#0000ff"/><rect x="85" y="453" width="1" height="9" fill="#0000ff"/><rect x="84" y="459" width="3" height="2" fill="#0000ff"/><rect x="94" y="468" width="11" height="14" fill="#fff"/><rect x="96" y="467" width="9" height="1" fill="#000"/><rect x="93" y="470" width="1" height="12" fill="#000"/><rect x="104" y="467" width="1" height="15" fill="#000"/><rect x="93" y="481" width="12" height="1" fill="#000"/><rect x="94" y="469" width="1" height="1" fill="#000"/><rect x="95" y="468" width="1" height="1" fill="#000"/><rect x="95" y="469" width="1" height="1" fill="#000"/><rect x="94" y="482" width="12" height="1" fill="#808080" opacity="0.6"/><rect x="105" y="468" width="1" height="15" fill="#808080" opacity="0.6"/><rect x="101" y="470" width="1" height="14" fill="#0000ff"/><rect x="99" y="478" width="5" height="2" fill="#0000ff"/><rect x="100" y="480" width="3" height="2" fill="#0000ff"/><rect x="108" y="470" width="1" height="14" fill="#0000ff"/><rect x="106" y="478" width="5" height="2" fill="#0000ff"/><rect x="107" y="480" width="3" height="2" fill="#0000ff"/><rect x="94" y="488" width="11" height="14" fill="#fff"/><rect x="96" y="487" width="9" height="1" fill="#000"/><rect x="93" y="490" width="1" height="12" fill="#000"/><rect x="104" y="487" width="1" height="15" fill="#000"/><rect x="93" y="501" width="12" height="1" fill="#000"/><rect x="94" y="489" width="1" height="1" fill="#000"/><rect x="95" y="488" width="1" height="1" fill="#000"/><rect x="95" y="489" width="1" height="1" fill="#000"/><rect x="94" y="502" width="12" height="1" fill="#808080" opacity="0.6"/><rect x="105" y="488" width="1" height="15" fill="#808080" opacity="0.6"/><rect x="101" y="490" width="1" height="14" fill="#0000ff"/><rect x="99" y="498" width="5" height="2" fill="#0000ff"/><rect x="100" y="500" width="3" height="2" fill="#0000ff"/><rect x="108" y="490" width="1" height="14" fill="#0000ff"/><rect x="106" y="498" width="5" height="2" fill="#0000ff"/><rect x="107" y="500" width="3" height="2" fill="#0000ff"/></svg><div style="position:absolute;left:-13px;top:-63px;width:630px;height:520px;"><div class="t" style="left:40px;top:65px;">Gesamte Belastung</div><div class="t" style="left:65px;top:85px;">1: ständige Lasten</div><div class="t" style="left:90px;top:105px;letter-spacing:-1.5px;">G1</div><div class="t" style="left:115px;top:125px;letter-spacing:-0.3px;">1: Eg</div><div class="t" style="left:90px;top:145px;letter-spacing:-1.5px;">G2</div><div class="t" style="left:115px;top:165px;letter-spacing:-0.09px;">2: Kappen und Belag</div><div class="t" style="left:65px;top:185px;letter-spacing:0.08px;">2: Vorspannung</div><div class="t" style="left:90px;top:205px;">mit nachträglichem Verbund</div><div class="t" style="left:115px;top:225px;">3: Vorsp.m.ntr.Verbund 1</div><div class="t" style="left:65px;top:245px;letter-spacing:0.07px;">3: Stützensenkung</div><div class="t" style="left:90px;top:265px;">wahrsch. Stützensenkung</div><div class="t" style="left:115px;top:285px;letter-spacing:0.24px;">4: wahrsch. <span style="font-size:10px">&Delta;</span>s (Achse 1)</div><div class="t" style="left:115px;top:305px;letter-spacing:0.35px;">5: wahrsch. <span style="font-size:10px">&Delta;</span>s (Achse 2)</div><div class="t" style="left:115px;top:325px;letter-spacing:0.35px;">6: wahrsch. <span style="font-size:10px">&Delta;</span>s (Achse 3)</div><div class="t" style="left:65px;top:345px;letter-spacing:0.17px;">4: Temperaturlasten</div><div class="t" style="left:90px;top:365px;letter-spacing:-0.09px;">ungleichmäßige Temperatur</div><div class="t" style="left:115px;top:385px;letter-spacing:0.44px;">7: Temperatur <span style="font-size:10px">&Delta;</span>T+</div><div class="t" style="left:115px;top:405px;letter-spacing:0.44px;">8: Temperatur <span style="font-size:10px">&Delta;</span>T-</div><div class="t" style="left:65px;top:425px;letter-spacing:0.2px;">5: Verkehrslasten</div><div class="t" style="left:90px;top:445px;letter-spacing:0.34px;">Restflächenlasten (2.5 kN/m2)</div><div class="t" style="left:115px;top:465px;letter-spacing:0.11px;">9: p=2.5 (Feld 1, links)</div><div class="t" style="left:115px;top:485px;">10: p=2.5 (Feld 1, rechts)</div></div></div><div style="position:absolute;left:311px;top:62px;width:14px;height:432px;background:linear-gradient(to right,#d4d4d4 0px,#d4d4d4 1px,#d8d8d8 1px,#d8d8d8 2px,#e6e6e6 2px,#e6e6e6 3px,#d4d4d4 3px,#d0d0d0 5px,#606060 5px,#606060 6px,#8a8a8a 6px,#8a8a8a 7px,#a8a8a8 7px,#a8a8a8 8px,#e8e8e8 8px,#e8e8e8 9px,#d4d4d4 9px,#d0d0d0 11px,#a0a0a0 11px,#a0a0a0 12px,#d4d4d4 12px)"></div><div style="position:absolute;left:311px;top:62px;width:14px;height:14px;background:#e4e4e4"><i style="left:0px;top:0px;width:13px;height:1px;background:#ffffff"></i><i style="left:0px;top:0px;width:1px;height:13px;background:#ffffff"></i><i style="left:0px;top:13px;width:14px;height:1px;background:#606060"></i><i style="left:13px;top:0px;width:1px;height:14px;background:#606060"></i><i style="left:1px;top:12px;width:12px;height:1px;background:#a0a0a0"></i><i style="left:12px;top:1px;width:1px;height:12px;background:#a0a0a0"></i></div><svg style="position:absolute;left:311px;top:62px;" width="14" height="14" viewBox="0 0 14 14" shape-rendering="crispEdges"><polygon points="1.8,9 11.2,9 6.5,4" fill="#000" shape-rendering="auto"/></svg><div style="position:absolute;left:311px;top:76px;width:14px;height:1px;background:#d8d8d8"></div><div style="position:absolute;left:311px;top:77px;width:14px;height:175px;background:#e4e4e4"><i style="left:0px;top:0px;width:13px;height:1px;background:#ffffff"></i><i style="left:0px;top:0px;width:1px;height:174px;background:#ffffff"></i><i style="left:0px;top:174px;width:14px;height:1px;background:#606060"></i><i style="left:13px;top:0px;width:1px;height:175px;background:#606060"></i><i style="left:1px;top:173px;width:12px;height:1px;background:#a0a0a0"></i><i style="left:12px;top:1px;width:1px;height:173px;background:#a0a0a0"></i></div><div style="position:absolute;left:311px;top:479px;width:14px;height:1px;background:#d8d8d8"></div><div style="position:absolute;left:311px;top:480px;width:14px;height:14px;background:#e4e4e4"><i style="left:0px;top:0px;width:13px;height:1px;background:#ffffff"></i><i style="left:0px;top:0px;width:1px;height:13px;background:#ffffff"></i><i style="left:0px;top:13px;width:14px;height:1px;background:#606060"></i><i style="left:13px;top:0px;width:1px;height:14px;background:#606060"></i><i style="left:1px;top:12px;width:12px;height:1px;background:#a0a0a0"></i><i style="left:12px;top:1px;width:1px;height:12px;background:#a0a0a0"></i></div><svg style="position:absolute;left:311px;top:480px;" width="14" height="14" viewBox="0 0 14 14" shape-rendering="crispEdges"><polygon points="1.8,4 11.2,4 6.5,9" fill="#000" shape-rendering="auto"/></svg><div style="position:absolute;left:12px;top:496px;width:297px;height:14px;background:linear-gradient(to bottom,#d4d4d4 0px,#d4d4d4 1px,#d8d8d8 1px,#d8d8d8 2px,#e6e6e6 2px,#e6e6e6 3px,#d4d4d4 3px,#d0d0d0 5px,#606060 5px,#606060 6px,#8a8a8a 6px,#8a8a8a 7px,#a8a8a8 7px,#a8a8a8 8px,#e8e8e8 8px,#e8e8e8 9px,#d4d4d4 9px,#d0d0d0 11px,#a0a0a0 11px,#a0a0a0 12px,#d4d4d4 12px)"></div><div style="position:absolute;left:12px;top:496px;width:14px;height:14px;background:#e4e4e4"><i style="left:0px;top:0px;width:13px;height:1px;background:#ffffff"></i><i style="left:0px;top:0px;width:1px;height:13px;background:#ffffff"></i><i style="left:0px;top:13px;width:14px;height:1px;background:#606060"></i><i style="left:13px;top:0px;width:1px;height:14px;background:#606060"></i><i style="left:1px;top:12px;width:12px;height:1px;background:#a0a0a0"></i><i style="left:12px;top:1px;width:1px;height:12px;background:#a0a0a0"></i></div><svg style="position:absolute;left:12px;top:496px;" width="14" height="14" viewBox="0 0 14 14" shape-rendering="crispEdges"><polygon points="9,2.2 9,11.3 3.8,6.8" fill="#000" shape-rendering="auto"/></svg><div style="position:absolute;left:26px;top:496px;width:1px;height:14px;background:#d8d8d8"></div><div style="position:absolute;left:27px;top:496px;width:174px;height:14px;background:#e4e4e4"><i style="left:0px;top:0px;width:173px;height:1px;background:#ffffff"></i><i style="left:0px;top:0px;width:1px;height:13px;background:#ffffff"></i><i style="left:0px;top:13px;width:174px;height:1px;background:#606060"></i><i style="left:173px;top:0px;width:1px;height:14px;background:#606060"></i><i style="left:1px;top:12px;width:172px;height:1px;background:#a0a0a0"></i><i style="left:172px;top:1px;width:1px;height:12px;background:#a0a0a0"></i></div><div style="position:absolute;left:294px;top:496px;width:1px;height:14px;background:#d8d8d8"></div><div style="position:absolute;left:295px;top:496px;width:14px;height:14px;background:#e4e4e4"><i style="left:0px;top:0px;width:13px;height:1px;background:#ffffff"></i><i style="left:0px;top:0px;width:1px;height:13px;background:#ffffff"></i><i style="left:0px;top:13px;width:14px;height:1px;background:#606060"></i><i style="left:13px;top:0px;width:1px;height:14px;background:#606060"></i><i style="left:1px;top:12px;width:12px;height:1px;background:#a0a0a0"></i><i style="left:12px;top:1px;width:1px;height:12px;background:#a0a0a0"></i></div><svg style="position:absolute;left:295px;top:496px;" width="14" height="14" viewBox="0 0 14 14" shape-rendering="crispEdges"><polygon points="4,2.5 4,11.5 9.5,7" fill="#000" shape-rendering="auto"/></svg><div style="position:absolute;left:333px;top:61px;width:287px;height:450px;background:#d4d4d4"><i style="left:0px;top:0px;width:286px;height:1px;background:#8c8c8c"></i><i style="left:0px;top:0px;width:1px;height:449px;background:#8c8c8c"></i><i style="left:1px;top:1px;width:284px;height:1px;background:#5c5c5c"></i><i style="left:1px;top:1px;width:1px;height:447px;background:#5c5c5c"></i><i style="left:2px;top:2px;width:282px;height:1px;background:#dcdcdc"></i><i style="left:2px;top:2px;width:1px;height:445px;background:#dcdcdc"></i><i style="left:0px;top:449px;width:287px;height:1px;background:#ffffff"></i><i style="left:286px;top:0px;width:1px;height:450px;background:#ffffff"></i></div><div class="t" style="left:343px;top:69px;">Lastfallordnerbezeichnung</div><div style="position:absolute;left:344px;top:91px;width:265px;height:21px;background:#ffffe6"><i style="left:0px;top:0px;width:264px;height:1px;background:#8c8c8c"></i><i style="left:0px;top:0px;width:1px;height:20px;background:#8c8c8c"></i><i style="left:1px;top:1px;width:262px;height:1px;background:#5c5c5c"></i><i style="left:1px;top:1px;width:1px;height:18px;background:#5c5c5c"></i><i style="left:0px;top:20px;width:265px;height:1px;background:#ffffff"></i><i style="left:264px;top:0px;width:1px;height:21px;background:#ffffff"></i><i style="left:1px;top:19px;width:263px;height:1px;background:#f0f0f0"></i><i style="left:263px;top:1px;width:1px;height:19px;background:#f0f0f0"></i></div><div class="t" style="left:351px;top:91px;letter-spacing:-1.5px;">G1</div><div style="position:absolute;left:346px;top:122px;width:264px;height:1px;background:#ffffff"></div><div style="position:absolute;left:346px;top:123px;width:264px;height:1px;background:#606060"></div><div class="t" style="left:343px;top:134px;">gehört zur Einwirkung</div><div style="position:absolute;left:344px;top:154px;width:265px;height:21px;background:#ffffe6"><i style="left:0px;top:0px;width:264px;height:1px;background:#8c8c8c"></i><i style="left:0px;top:0px;width:1px;height:20px;background:#8c8c8c"></i><i style="left:1px;top:1px;width:262px;height:1px;background:#5c5c5c"></i><i style="left:1px;top:1px;width:1px;height:18px;background:#5c5c5c"></i><i style="left:0px;top:20px;width:265px;height:1px;background:#ffffff"></i><i style="left:264px;top:0px;width:1px;height:21px;background:#ffffff"></i><i style="left:1px;top:19px;width:263px;height:1px;background:#f0f0f0"></i><i style="left:263px;top:1px;width:1px;height:19px;background:#f0f0f0"></i></div><div class="t" style="left:351px;top:154px;color:#000;letter-spacing:0px;">1: ständige Lasten</div><div style="position:absolute;left:591px;top:157px;width:15px;height:15px;background:#e4e4e4"><i style="left:0px;top:0px;width:14px;height:1px;background:#ffffff"></i><i style="left:0px;top:0px;width:1px;height:14px;background:#ffffff"></i><i style="left:0px;top:14px;width:15px;height:1px;background:#606060"></i><i style="left:14px;top:0px;width:1px;height:15px;background:#606060"></i><i style="left:1px;top:13px;width:13px;height:1px;background:#a0a0a0"></i><i style="left:13px;top:1px;width:1px;height:13px;background:#a0a0a0"></i></div><svg style="position:absolute;left:591px;top:157px;" width="15" height="15" viewBox="0 0 15 15" shape-rendering="crispEdges"><polygon points="3,5 12,5 7.5,10" fill="#000" shape-rendering="auto"/></svg><div class="t" style="left:343px;top:179px;letter-spacing:0.17px;">in Lastfallordner</div><div style="position:absolute;left:344px;top:200px;width:265px;height:21px;background:#ffffe6"><i style="left:0px;top:0px;width:264px;height:1px;background:#8c8c8c"></i><i style="left:0px;top:0px;width:1px;height:20px;background:#8c8c8c"></i><i style="left:1px;top:1px;width:262px;height:1px;background:#5c5c5c"></i><i style="left:1px;top:1px;width:1px;height:18px;background:#5c5c5c"></i><i style="left:0px;top:20px;width:265px;height:1px;background:#ffffff"></i><i style="left:264px;top:0px;width:1px;height:21px;background:#ffffff"></i><i style="left:1px;top:19px;width:263px;height:1px;background:#f0f0f0"></i><i style="left:263px;top:1px;width:1px;height:19px;background:#f0f0f0"></i></div><div class="t" style="left:351px;top:200px;color:#0c9c0c;letter-spacing:0.13px;">kein Lastfallordner</div><div style="position:absolute;left:591px;top:203px;width:15px;height:15px;background:#e4e4e4"><i style="left:0px;top:0px;width:14px;height:1px;background:#ffffff"></i><i style="left:0px;top:0px;width:1px;height:14px;background:#ffffff"></i><i style="left:0px;top:14px;width:15px;height:1px;background:#606060"></i><i style="left:14px;top:0px;width:1px;height:15px;background:#606060"></i><i style="left:1px;top:13px;width:13px;height:1px;background:#a0a0a0"></i><i style="left:13px;top:1px;width:1px;height:13px;background:#a0a0a0"></i></div><svg style="position:absolute;left:591px;top:203px;" width="15" height="15" viewBox="0 0 15 15" shape-rendering="crispEdges"><polygon points="3,5 12,5 7.5,10" fill="#000" shape-rendering="auto"/></svg><div style="position:absolute;left:346px;top:231px;width:264px;height:1px;background:#ffffff"></div><div style="position:absolute;left:346px;top:232px;width:264px;height:1px;background:#606060"></div><div class="t" style="left:343px;top:251px;">alle Elemente der nächsten Ebene in diesem</div><div class="t" style="left:343px;top:267px;letter-spacing:0.05px;">Ordner verhalten sich überlagerungstechnisch</div><div style="position:absolute;left:344px;top:290px;width:265px;height:21px;background:#d4d4d4"><i style="left:0px;top:0px;width:264px;height:1px;background:#a8a8a8"></i><i style="left:0px;top:0px;width:1px;height:20px;background:#a8a8a8"></i><i style="left:0px;top:20px;width:265px;height:1px;background:#ececec"></i><i style="left:264px;top:0px;width:1px;height:21px;background:#ececec"></i></div><div class="t" style="left:351px;top:290px;color:#000;letter-spacing:0.1px;">brückenbauspezifisch</div><div style="position:absolute;left:591px;top:293px;width:17px;height:15px;background:transparent"><i style="left:0px;top:0px;width:16px;height:1px;background:#ececec"></i><i style="left:0px;top:0px;width:1px;height:14px;background:#ececec"></i><i style="left:0px;top:14px;width:17px;height:1px;background:#a8a8a8"></i><i style="left:16px;top:0px;width:1px;height:15px;background:#a8a8a8"></i></div><svg style="position:absolute;left:591px;top:293px;" width="17" height="15" viewBox="0 0 17 15" shape-rendering="crispEdges"><polygon points="3.5,5 12.5,5 8,10" fill="#a0a0a0" shape-rendering="auto"/></svg><div class="t" style="left:343px;top:317px;">und sind vom Typ</div><div style="position:absolute;left:344px;top:340px;width:265px;height:21px;background:#ffffe6"><i style="left:0px;top:0px;width:264px;height:1px;background:#8c8c8c"></i><i style="left:0px;top:0px;width:1px;height:20px;background:#8c8c8c"></i><i style="left:1px;top:1px;width:262px;height:1px;background:#5c5c5c"></i><i style="left:1px;top:1px;width:1px;height:18px;background:#5c5c5c"></i><i style="left:0px;top:20px;width:265px;height:1px;background:#ffffff"></i><i style="left:264px;top:0px;width:1px;height:21px;background:#ffffff"></i><i style="left:1px;top:19px;width:263px;height:1px;background:#f0f0f0"></i><i style="left:263px;top:1px;width:1px;height:19px;background:#f0f0f0"></i></div><div class="t" style="left:351px;top:340px;color:#000;letter-spacing:0px;">Eigengewicht G1</div><div style="position:absolute;left:591px;top:343px;width:15px;height:15px;background:#e4e4e4"><i style="left:0px;top:0px;width:14px;height:1px;background:#ffffff"></i><i style="left:0px;top:0px;width:1px;height:14px;background:#ffffff"></i><i style="left:0px;top:14px;width:15px;height:1px;background:#606060"></i><i style="left:14px;top:0px;width:1px;height:15px;background:#606060"></i><i style="left:1px;top:13px;width:13px;height:1px;background:#a0a0a0"></i><i style="left:13px;top:1px;width:1px;height:13px;background:#a0a0a0"></i></div><svg style="position:absolute;left:591px;top:343px;" width="15" height="15" viewBox="0 0 15 15" shape-rendering="crispEdges"><polygon points="3,5 12,5 7.5,10" fill="#000" shape-rendering="auto"/></svg><div style="position:absolute;left:346px;top:390px;width:264px;height:1px;background:#ffffff"></div><div style="position:absolute;left:346px;top:391px;width:264px;height:1px;background:#606060"></div><div class="t" style="left:343px;top:397px;">Dieser Ordner entspricht einer Extremierung</div><div class="t" style="left:343px;top:412px;"><span style="letter-spacing:0.07px">seiner Elemente und ist vom Typ</span>&nbsp; <b style="letter-spacing:-0.7px">additiv</b></div></body></html>
